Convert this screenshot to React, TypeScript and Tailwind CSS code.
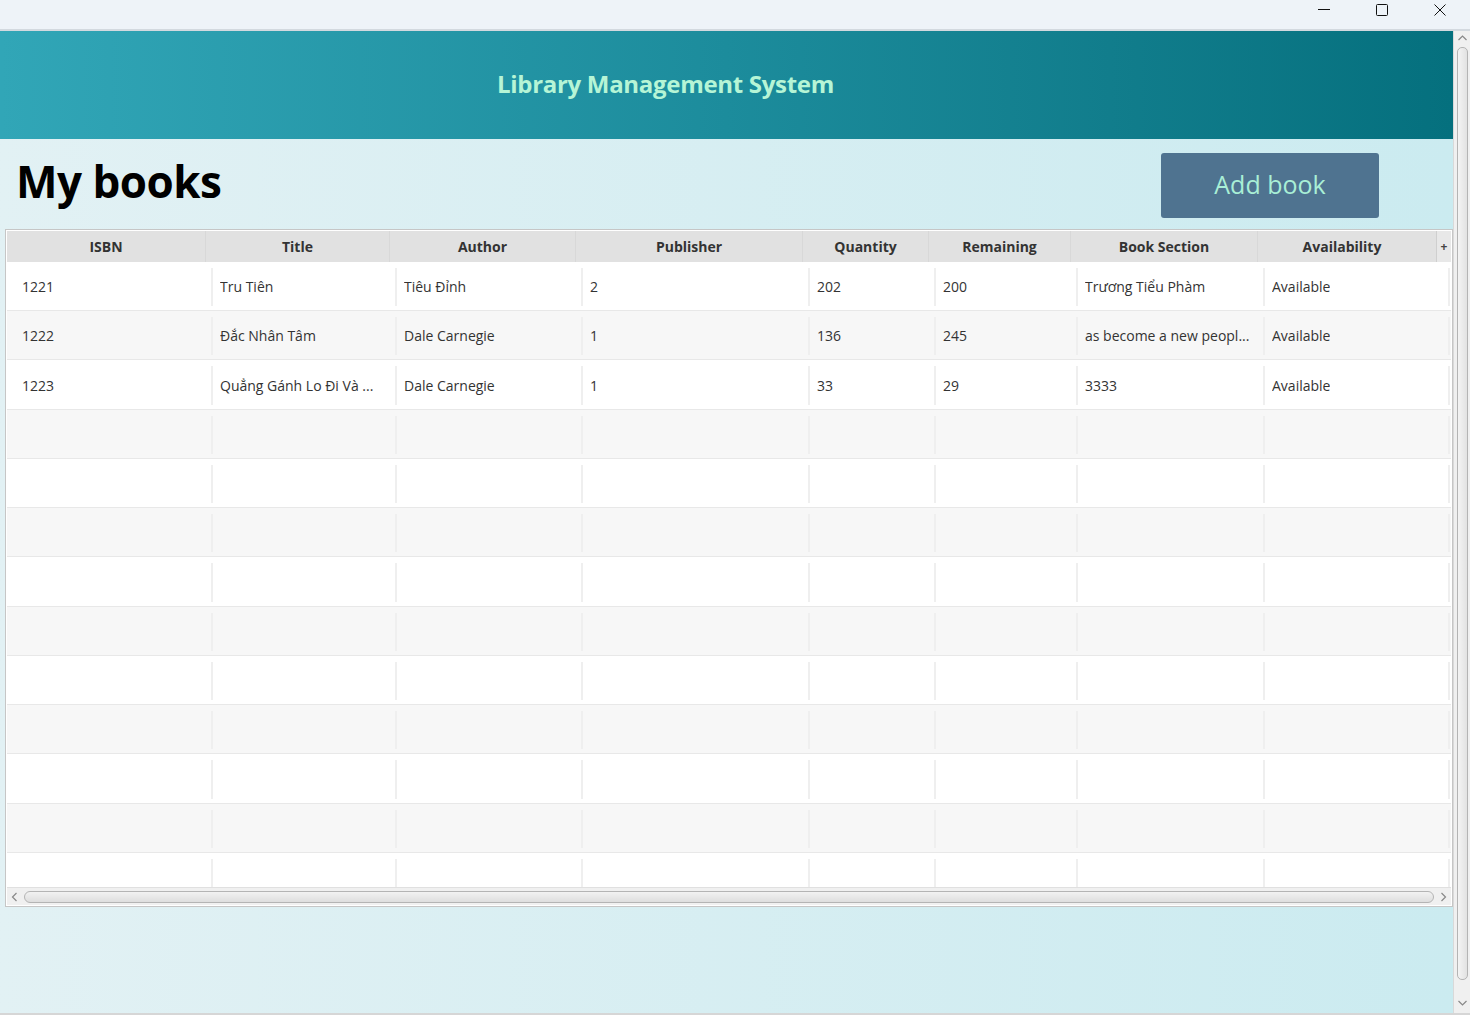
import React from "react";

const headers = ["ISBN", "Title", "Author", "Publisher", "Quantity", "Remaining", "Book Section", "Availability"];
const data: string[][] = [
  ["1221", "Tru Tiên", "Tiêu Đỉnh", "2", "202", "200", "Trương Tiểu Phàm", "Available"],
  ["1222", "Đắc Nhân Tâm", "Dale Carnegie", "1", "136", "245", "as become a new peopl...", "Available"],
  ["1223", "Quẳng Gánh Lo Đi Và ...", "Dale Carnegie", "1", "33", "29", "3333", "Available"],
];
const rowHeights = [49, 49, 50, 49, 49, 49, 50, 49, 49, 49, 50, 49, 49];

function TitleBar() {
  return (
    <div className="h-[31px] shrink-0 bg-[#eef3f8] border-b-2 border-[#d3d9df] flex justify-end items-start">
      <div className="w-[58px] h-[20px] flex items-center justify-center">
        <svg width="12" height="12" viewBox="0 0 12 12"><path d="M0 5.5h12" stroke="#111" strokeWidth="1" /></svg>
      </div>
      <div className="w-[58px] h-[20px] flex items-center justify-center">
        <svg width="12" height="12" viewBox="0 0 12 12"><rect x="0.5" y="0.5" width="11" height="11" rx="1" fill="none" stroke="#111" strokeWidth="1" /></svg>
      </div>
      <div className="w-[58px] h-[20px] flex items-center justify-center mr-[1px]">
        <svg width="12" height="12" viewBox="0 0 12 12"><path d="M0.5 0.5l11 11M11.5 0.5l-11 11" stroke="#111" strokeWidth="1" /></svg>
      </div>
    </div>
  );
}

function VScroll() {
  return (
    <div className="w-[17px] shrink-0 bg-[#f0f0f0] border-l border-[#d9d9d9] flex flex-col items-center pb-[3px]">
      <svg className="mt-[4px]" width="9" height="6" viewBox="0 0 9 6"><path d="M0.5 5L4.5 1L8.5 5" stroke="#888" fill="none" strokeWidth="1.2" /></svg>
      <div className="mt-[6px] w-[11px] flex-1 rounded-[5px] border border-[#b4b4b4] bg-gradient-to-r from-[#f4f4f4] to-[#e2e2e2]" />
      <svg className="mt-[20px] mb-[4px]" width="9" height="6" viewBox="0 0 9 6"><path d="M0.5 1L4.5 5L8.5 1" stroke="#888" fill="none" strokeWidth="1.2" /></svg>
    </div>
  );
}

function HScroll() {
  return (
    <div className="h-[18px] shrink-0 bg-[#f0f0f0] border-t border-[#e0e0e0] flex items-center px-[4px] gap-[6px]">
      <svg width="7" height="10" viewBox="0 0 7 10"><path d="M5.5 1L1.5 5L5.5 9" stroke="#888" fill="none" strokeWidth="1.2" /></svg>
      <div className="flex-1 h-[12px] rounded-[6px] border border-[#b4b4b4] bg-gradient-to-b from-[#f2f2f2] to-[#dedede]" />
      <svg width="7" height="10" viewBox="0 0 7 10"><path d="M1.5 1L5.5 5L1.5 9" stroke="#888" fill="none" strokeWidth="1.2" /></svg>
    </div>
  );
}

function Row({ cells, idx, h }: { cells: string[]; idx: number; h: number }) {
  return (
    <div
      className={`grid grid-cols-[199px_184px_186px_227px_126px_142px_187px_1fr] shrink-0 border-b border-[#e8e8e8] ${idx % 2 === 0 ? "bg-white" : "bg-[#f7f7f7]"}`}
      style={{ height: h }}
    >
      {headers.map((_, i) => (
        <div key={i} className="pl-[5px] pt-[6px] pb-[4px] min-w-0 flex">
          <div className={`flex-1 min-w-0 flex items-center pl-[7px] border-l-2 ${i === 0 ? "border-transparent pl-[8px]" : "border-[#efefef]"} ${i === 7 ? "border-r-2 border-r-[#efefef] mr-[1px]" : ""}`}>
            <span className="truncate text-[14px] text-[#333] mt-[-1px]">{cells[i] ?? ""}</span>
          </div>
        </div>
      ))}
    </div>
  );
}

export default function App() {
  const rows: string[][] = [...data];
  for (let i = 0; i < 10; i++) rows.push([]);
  return (
    <div className="w-[1470px] h-[1015px] overflow-hidden flex flex-col bg-[#f0f0f0]" style={{ fontFamily: '"Open Sans", "Noto Sans", sans-serif' }}>
      <TitleBar />
      <div className="flex flex-1 min-h-0 border-b-2 border-[#d6d6d6]">
        <main className="flex-1 flex flex-col min-w-0">
          <header className="h-[108px] shrink-0 bg-gradient-to-r from-[#31a6b7] via-[#1c8c9c] to-[#05707e] flex items-center justify-center">
            <h1 className="text-[24px] font-bold text-[#b6f5d6] tracking-[-0.3px] ml-[-122px] mt-[-2px]">Library Management System</h1>
          </header>
          <section className="flex-1 min-h-0 bg-gradient-to-r from-[#e2f1f4] to-[#cbebf0] flex flex-col">
            <div className="h-[90px] shrink-0 flex items-center justify-between pl-[16px] pr-[74px]">
              <h2 className="text-[44px] font-bold text-black tracking-[-0.5px] mt-[-6px]">My books</h2>
              <button className="w-[218px] h-[65px] rounded-[3px] bg-[#4f7390] text-[#a9efd6] text-[25px] mt-[2px]">Add book</button>
            </div>
            <div className="ml-[5px] w-[1448px] h-[678px] border border-[#c6c6c6] bg-white flex flex-col p-[1px]">
              <div className="h-[31px] shrink-0 flex bg-[#e1e1e1]">
                <div className="grid grid-cols-[199px_184px_186px_227px_126px_142px_187px_1fr] flex-1">
                  {headers.map((h, i) => (
                    <div key={h} className={`flex items-center justify-center text-[14px] font-bold text-[#333] ${i < 7 ? "border-r border-[#d8d8d8]" : "pr-[10px]"}`}>
                      {h}
                    </div>
                  ))}
                </div>
                <div className="w-[15px] shrink-0 border-l border-[#cfcfcf] bg-[#e8e8e8] flex items-center justify-center text-[12px] font-bold text-[#444]">+</div>
              </div>
              <div className="flex-1 min-h-0 overflow-hidden flex flex-col">
                {rows.map((r, i) => (
                  <Row key={i} cells={r} idx={i} h={rowHeights[i]} />
                ))}
              </div>
              <HScroll />
            </div>
          </section>
        </main>
        <VScroll />
      </div>
    </div>
  );
}
